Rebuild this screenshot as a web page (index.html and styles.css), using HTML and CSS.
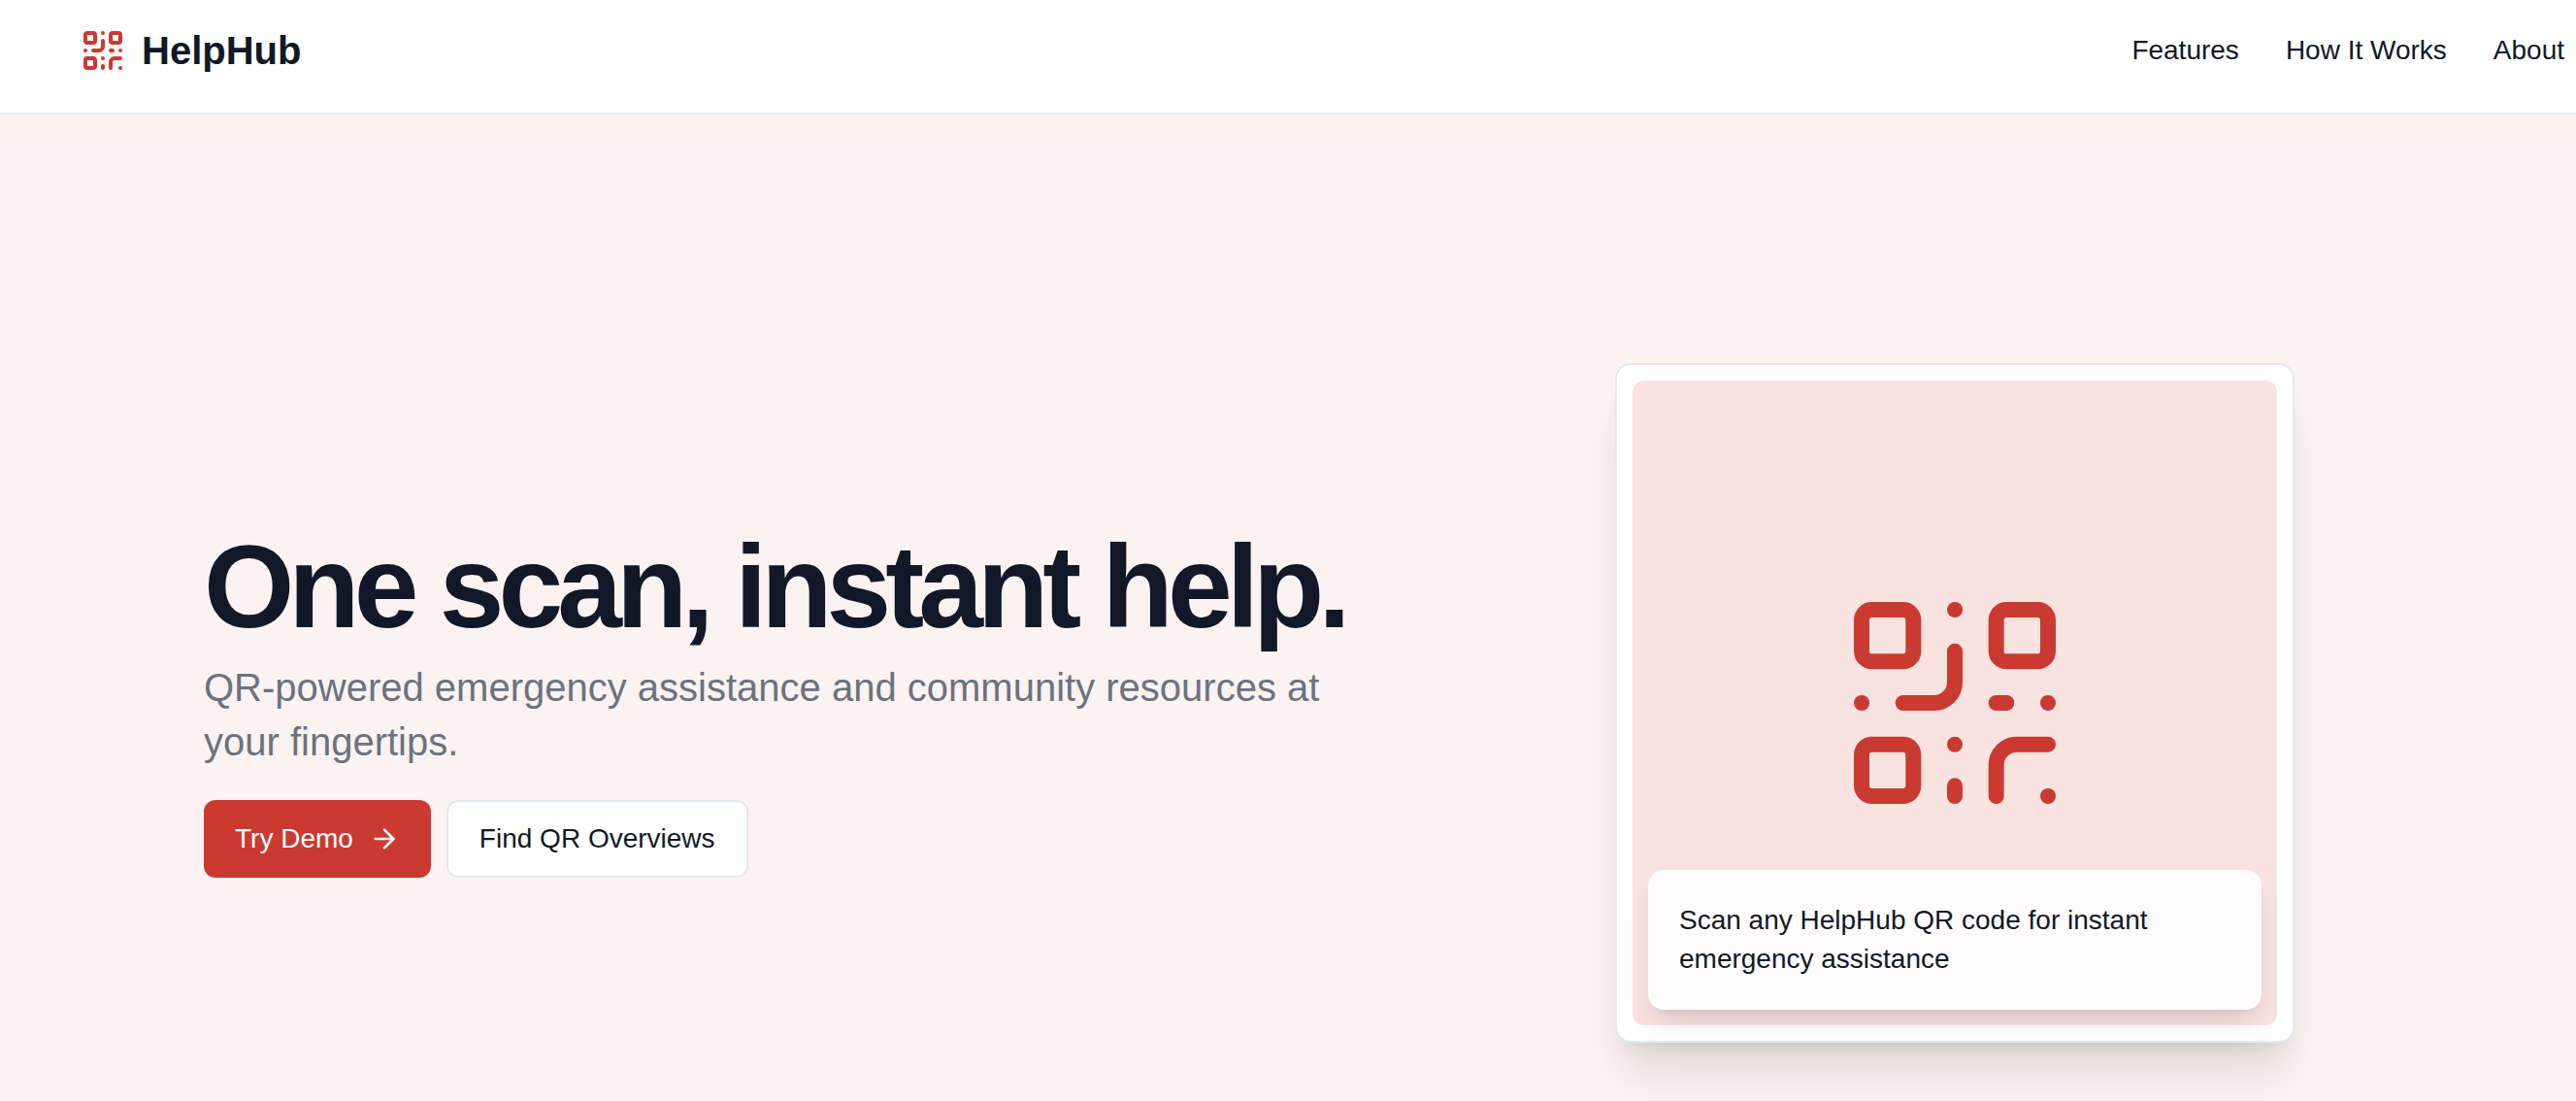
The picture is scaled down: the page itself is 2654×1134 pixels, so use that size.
FILE: index.html
```html
<!DOCTYPE html>
<html lang="en">
<head>
  <meta charset="UTF-8" />
  <meta name="viewport" content="width=device-width, initial-scale=1.0"/>
  <title>HelpHub</title>
  <link rel="stylesheet" href="styles.css">
</head>
<body>

  <svg class="sprite" aria-hidden="true">
    <symbol id="qr-code" viewBox="0 0 24 24">
      <rect width="5" height="5" x="3" y="3" rx="1"/>
      <rect width="5" height="5" x="16" y="3" rx="1"/>
      <rect width="5" height="5" x="3" y="16" rx="1"/>
      <path d="M21 16h-3a2 2 0 0 0-2 2v3"/>
      <path d="M21 21v.01"/>
      <path d="M12 7v3a2 2 0 0 1-2 2H7"/>
      <path d="M3 12h.01"/>
      <path d="M12 3h.01"/>
      <path d="M12 16v.01"/>
      <path d="M16 12h1"/>
      <path d="M21 12v.01"/>
      <path d="M12 21v-1"/>
    </symbol>
  </svg>

  <header class="header">
    <a href="#" class="logo">
      <svg class="icon logo-icon" aria-hidden="true"><use href="#qr-code"/></svg>
      <span>HelpHub</span>
    </a>
    <nav class="nav">
      <a href="#features">Features</a>
      <a href="#how-it-works">How It Works</a>
      <a href="#about">About</a>
    </nav>
  </header>

  <main class="hero">
    <div class="hero-text">
      <h1>One scan, instant help.</h1>
      <p>QR-powered emergency assistance and community resources at your fingertips.</p>
      <div class="actions">
        <button type="button" class="btn btn-primary">
          Try Demo
          <svg class="icon arrow" viewBox="0 0 24 24" aria-hidden="true">
            <path d="M5 12h14"/>
            <path d="m12 5 7 7-7 7"/>
          </svg>
        </button>
        <button type="button" class="btn btn-outline">Find QR Overviews</button>
      </div>
    </div>

    <div class="card">
      <div class="card-inner">
        <svg class="icon card-qr" aria-hidden="true"><use href="#qr-code"/></svg>
        <p class="caption">Scan any HelpHub QR code for instant emergency assistance</p>
      </div>
    </div>
  </main>

</body>
</html>
```

FILE: styles.css
```css
* {
    box-sizing: border-box;
}
body {
    margin: 0;
    min-height: 100vh;
    display: flex;
    flex-direction: column;
    background: #fcf2f1;
    font-family: Helvetica, 'Liberation Sans', Arial, sans-serif;
    font-size: 28px;
    line-height: 40px;
    color: #111827;
}
h1, p {
    margin: 0;
}
a {
    color: inherit;
    text-decoration: none;
}
.sprite {
    display: none;
}
.icon {
    fill: none;
    stroke: currentColor;
    stroke-width: 2;
    stroke-linecap: round;
    stroke-linejoin: round;
    flex-shrink: 0;
}

/* header */
.header {
    display: flex;
    justify-content: space-between;
    align-items: center;
    padding: 28px 12px 40px 82px;
    background: #ffffff;
    border-bottom: 2px solid #e2e8f0;
}
.logo {
    display: flex;
    align-items: center;
    gap: 16px;
    font-size: 40px;
    line-height: 48px;
    font-weight: bold;
}
.logo-icon {
    width: 48px;
    height: 48px;
    color: #ca3a31;
}
.nav {
    display: flex;
    gap: 48px;
}

/* hero */
.hero {
    flex: 1;
    display: grid;
    grid-template-columns: 1fr 860px;
    align-items: center;
    padding: 256px 210px 60px;
}
.hero-text {
    max-width: 1200px;
}
.hero-text h1 {
    font-size: 120px;
    line-height: 120px;
    letter-spacing: -6px;
    margin-bottom: 16px;
}
.hero-text p {
    font-size: 40px;
    line-height: 56px;
    color: #6b7280;
}
.actions {
    display: flex;
    gap: 16px;
    margin-top: 32px;
}
.btn {
    display: flex;
    align-items: center;
    gap: 16px;
    height: 80px;
    padding: 0 32px;
    border: none;
    border-radius: 12px;
    font: inherit;
    cursor: pointer;
}
.btn-primary {
    background: #ca3a31;
    color: #ffffff;
}
.btn-outline {
    background: #ffffff;
    border: 2px solid #e2e8f0;
    color: #111827;
}
.arrow {
    width: 32px;
    height: 32px;
}

/* scan card */
.card {
    justify-self: center;
    width: 700px;
    padding: 16px;
    background: #ffffff;
    border: 2px solid #e2e8f0;
    border-radius: 16px;
    box-shadow: 0 40px 50px -10px rgba(0, 0, 0, 0.1), 0 16px 20px -12px rgba(0, 0, 0, 0.1);
}
.card-inner {
    position: relative;
    display: flex;
    justify-content: center;
    align-items: center;
    aspect-ratio: 1;
    background: #f8e3e1;
    border-radius: 12px;
}
.card-qr {
    width: 256px;
    height: 256px;
    color: #ca3a31;
    stroke-width: 1.5;
}
.caption {
    position: absolute;
    left: 16px;
    right: 16px;
    bottom: 16px;
    padding: 32px;
    background: #fefcfc;
    border-radius: 16px;
    box-shadow: 0 20px 30px -6px rgba(0, 0, 0, 0.1), 0 8px 12px -8px rgba(0, 0, 0, 0.1);
}

@media (max-width: 2200px) {
    .hero {
        grid-template-columns: 1fr;
        gap: 80px;
        padding: 80px 40px;
    }

    .card {
        width: 100%;
        max-width: 700px;
    }
}
```
